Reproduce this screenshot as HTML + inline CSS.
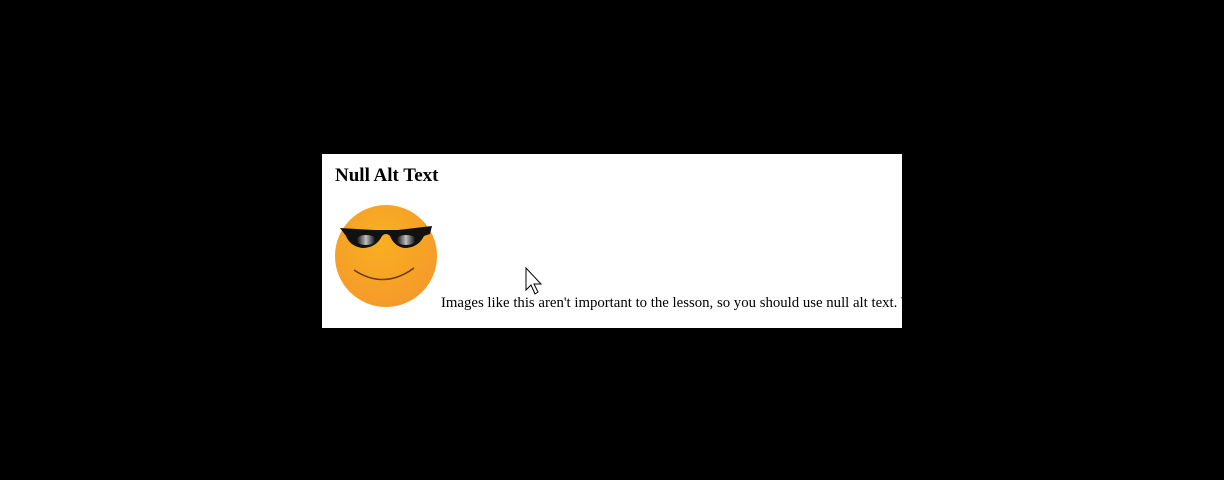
<!DOCTYPE html>
<html><head><style>
html,body{margin:0;padding:0;background:#000;width:1224px;height:480px;overflow:hidden;position:relative}
.box{position:absolute;left:322px;top:154px;width:580px;height:174px;background:#fff;overflow:hidden;font-family:"Liberation Serif",serif;color:#000}
h1{position:absolute;left:13px;top:11px;margin:0;font-size:19px;font-weight:bold}
.t{position:absolute;left:119px;top:141px;font-size:14.8px;white-space:nowrap}
svg{position:absolute}
</style></head><body>
<div class="box">
<h1>Null Alt Text</h1>
<svg style="left:12px;top:50px" width="104" height="104" viewBox="0 0 104 104">
<defs><radialGradient id="g" cx="45%" cy="35%" r="65%"><stop offset="0" stop-color="#f8b020"/><stop offset="1" stop-color="#f59a2a"/></radialGradient>
<linearGradient id="s" x1="0" x2="1"><stop offset="0" stop-color="#000"/><stop offset=".5" stop-color="#ddd"/><stop offset="1" stop-color="#000"/></linearGradient></defs>
<circle cx="52" cy="52" r="51" fill="url(#g)"/>
<path d="M6 24 L40 26 L64 26 L98 22 L96 30 L90 32 Q84 44 70 44 Q60 42 56 32 Q52 28 48 32 Q42 44 28 44 Q16 42 12 32 Z" fill="#111"/>
<ellipse cx="32" cy="36" rx="10" ry="5" fill="url(#s)" opacity=".85"/>
<ellipse cx="72" cy="36" rx="10" ry="5" fill="url(#s)" opacity=".85"/>
<path d="M20 66 Q50 86 80 64" stroke="#6a3a10" stroke-width="1.5" fill="none"/>
</svg>
<div class="t">Images like this aren't important to the lesson, so you should use null alt text. We</div>
</div>
<svg style="left:524px;top:266px" width="22" height="32" viewBox="0 0 22 32"><path d="M2 2 L2 24 L7 19 L11 28 L14 26 L10 18 L17 18 Z" fill="#fff" stroke="#000" stroke-width="1"/></svg>
</body></html>
